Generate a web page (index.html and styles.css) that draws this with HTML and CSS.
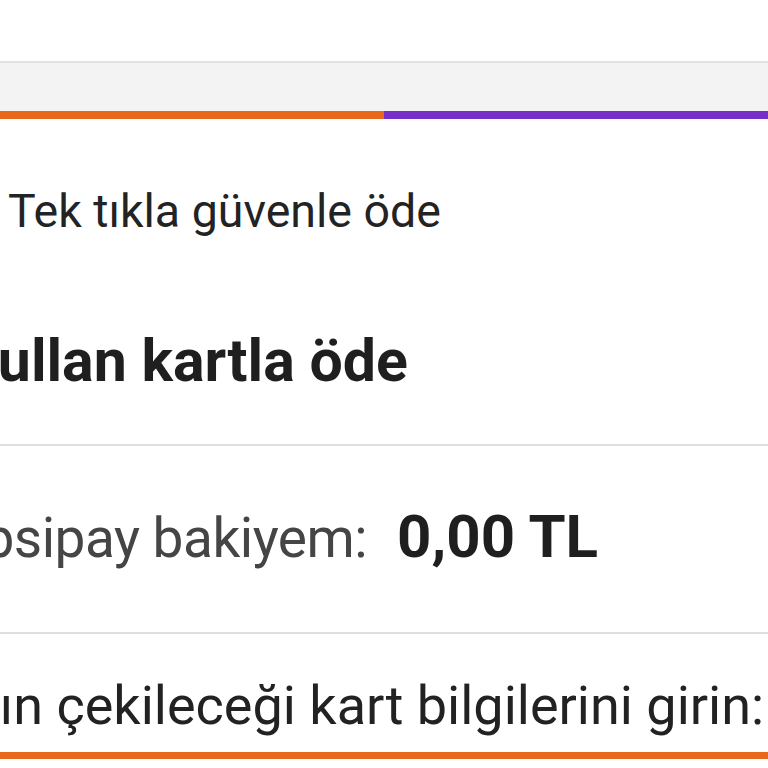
FILE: index.html
```html
<!DOCTYPE html>
<html lang="tr">
<head>
  <meta charset="UTF-8">
  <title>Ödeme</title>
  <link rel="stylesheet" href="styles.css">
</head>
<body>

<div class="page">
  <div class="topbar"></div>
  <div class="band"></div>
  <div class="progress">
    <div class="step done"></div>
    <div class="step active"></div>
  </div>

  <div class="row one-click">Tek tıkla güvenle öde</div>

  <div class="row title"><span class="cut-title">Kullan kartla öde</span></div>

  <div class="row balance">
    <span class="cut-balance">Hepsipay bakiyem:</span>
    <span class="amount">0,00 TL</span>
  </div>

  <div class="row card-info"><span class="cut-info">Tutarın çekileceği kart bilgilerini girin:</span></div>
  <div class="underline"></div>
</div>

</body>
</html>
```

FILE: styles.css
```css
html, body {
  margin: 0;
  padding: 0;
  background: #fff;
  overflow: hidden;
}
body {
  font-family: Roboto, 'Noto Sans', sans-serif;
  color: #222;
}
.page {
  width: 768px;
  height: 768px;
  overflow: hidden;
}
.topbar {
  height: 61px;
  background: #fff;
}
.band {
  height: 50px;
  background: #f3f3f4;
  border-top: 2px solid #e2e2e2;
  box-sizing: border-box;
}
.progress {
  display: flex;
  height: 8px;
}
.step {
  flex: 1;
}
.step.done { background: #e8681e; }
.step.active { background: #7630c8; }

.row {
  white-space: nowrap;
  overflow: hidden;
  box-sizing: border-box;
}
.one-click {
  padding: 64px 0 0 8px;
  font-size: 46.5px;
  line-height: 56px;
  color: #232323;
}
.title {
  height: 207px;
  padding-top: 88px;
  font-size: 59px;
  line-height: 68px;
  font-weight: 700;
  color: #1f1f1f;
  border-bottom: 2px solid #dedede;
}
.cut-title {
  margin-left: -39px;
}
.balance {
  display: flex;
  align-items: baseline;
  height: 188px;
  padding-top: 58px;
  font-size: 55px;
  line-height: 66px;
  color: #454545;
  border-bottom: 2px solid #dedede;
}
.cut-balance {
  margin-left: -84px;
  letter-spacing: -0.5px;
}
.amount {
  margin-left: 30px;
  font-size: 60px;
  font-weight: 700;
  color: #1f1f1f;
}
.card-info {
  height: 118px;
  padding-top: 40px;
  font-size: 54px;
  line-height: 64px;
  color: #222;
}
.cut-info {
  margin-left: -125px;
}
.underline {
  height: 7px;
  background: #e8681e;
}
```
